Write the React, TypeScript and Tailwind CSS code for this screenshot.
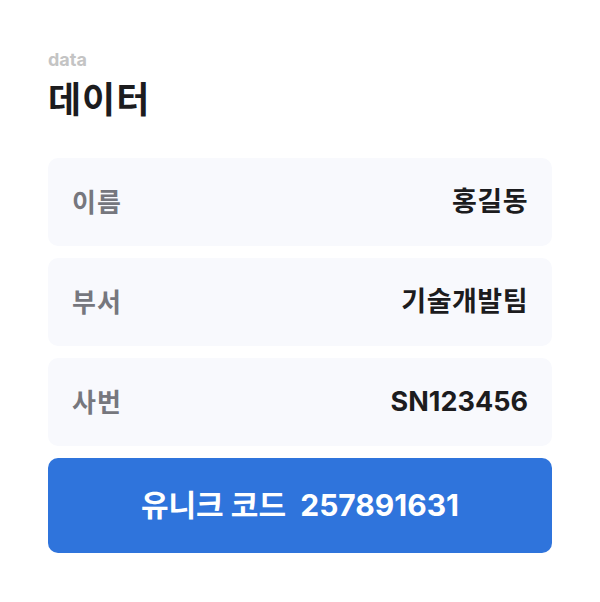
const font = { fontFamily: '"Inter", "Noto Sans CJK KR", sans-serif' };

const rows = [
  { label: "이름", value: "홍길동", ko: true },
  { label: "부서", value: "기술개발팀", ko: true },
  { label: "사번", value: "SN123456", ko: false },
];

export default function App() {
  return (
    <div className="min-h-[602px] w-[600px] bg-white px-12 pt-[50px]" style={font}>
      <div className="text-[18px] font-bold leading-5 text-[#c4c4c4]">data</div>
      <h1 className="mt-2 text-[36px] font-bold leading-[44px] tracking-[1px] text-[#1c1c1e]">데이터</h1>

      <div className="mt-9 flex flex-col gap-3">
        {rows.map((r) => (
          <div
            key={r.label}
            className="flex h-[88px] items-center justify-between rounded-[10px] bg-[#f8f9fd] px-6"
          >
            <span className="text-[26px] font-semibold tracking-[1px] text-[#76777e]">{r.label}</span>
            <span
              className={
                r.ko
                  ? "text-[27px] font-bold tracking-[0.5px] text-[#1c1c1e]"
                  : "text-[27px] font-bold text-[#1c1c1e]"
              }
            >
              {r.value}
            </span>
          </div>
        ))}

        <button className="flex h-[95px] items-center justify-center rounded-[10px] bg-[#2f74dc] text-[30px] font-bold text-white">
          유니크 코드&nbsp;&nbsp;257891631
        </button>
      </div>
    </div>
  );
}
